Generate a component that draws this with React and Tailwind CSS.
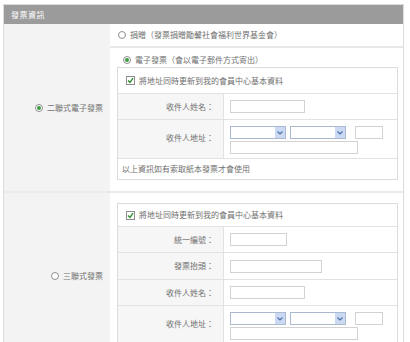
import React from "react"

const font = { fontFamily: '"Noto Sans CJK TC", "Noto Sans CJK SC", sans-serif' }

const Radio = ({ checked }) => (
  <span className="inline-flex w-[8px] h-[8px] rounded-full border border-[#8f8f8f] bg-white items-center justify-center shrink-0">
    {checked && <span className="w-[4px] h-[4px] rounded-full bg-[#3f9b3f]" />}
  </span>
)

const Checkbox = () => (
  <span className="inline-flex w-[9px] h-[9px] border border-[#8f8f8f] bg-white items-center justify-center shrink-0">
    <svg width="7" height="7" viewBox="0 0 7 7">
      <path d="M1 3.5 L3 5.5 L6 1.2" stroke="#2f8f2f" strokeWidth="1.4" fill="none" />
    </svg>
  </span>
)

const TextBox = ({ w }) => (
  <div className={`h-[13px] border border-[#d2d2d2] bg-white ${w}`} />
)

const Select = () => (
  <div className="h-[13px] w-[56px] border border-[#a9b9cf] bg-white flex justify-end">
    <div className="w-[10px] h-full bg-[#cbd9f3] flex items-center justify-center">
      <svg width="6" height="4" viewBox="0 0 6 4">
        <path d="M0.5 0.5 L3 3 L5.5 0.5" stroke="#4d6fa8" strokeWidth="1.2" fill="none" />
      </svg>
    </div>
  </div>
)

const Address = () => (
  <div className="flex flex-col gap-[2px]">
    <div className="flex items-center gap-[4px]">
      <Select />
      <Select />
      <div className="ml-[5px]">
        <TextBox w="w-[28px]" />
      </div>
    </div>
    <TextBox w="w-[128px]" />
  </div>
)

const Row = ({ label, h, top, children }) => (
  <div className={`flex border-t border-[#e2e2e2] ${h}`}>
    <div className={`w-[106px] bg-[#f6f6f6] border-r border-[#e2e2e2] flex justify-end pr-[9px] ${top ? "pt-[14px]" : "items-center"}`}>
      {label}
    </div>
    <div className={`flex-1 pl-[6px] flex ${top ? "pt-[6px]" : "items-center"}`}>{children}</div>
  </div>
)

const SyncRow = ({ h }) => (
  <div className={`flex items-center gap-[4px] pl-[8px] ${h}`}>
    <Checkbox />
    <span>將地址同時更新到我的會員中心基本資料</span>
  </div>
)

export default function App() {
  return (
    <div className="w-[410px] h-[342px] overflow-hidden bg-white pt-[4px] pl-[3px] text-[8px] leading-none text-[#707070]" style={font}>
      <div className="w-[401px] border border-[#dcdcdc]">
        <div className="h-[19px] bg-[#9b9b9b] text-white flex items-center pl-[7px] tracking-[0.5px]">發票資訊</div>

        {/* 二聯式電子發票 */}
        <div className="flex">
          <div className="w-[106px] bg-[#f3f3f3] flex items-center justify-end pr-[7px] gap-[4px]">
            <Radio checked />
            <span>二聯式電子發票</span>
          </div>
          <div className="flex-1">
            <div className="h-[24px] flex items-center gap-[4px] pl-[8px] border-b-2 border-[#e8e8e8]">
              <Radio />
              <span>捐贈（發票捐贈勵馨社會福利世界基金會）</span>
            </div>
            <div className="pl-[7px] pr-[5px] pt-[8px] pb-[11px]">
              <div className="flex items-center gap-[4px] pl-[6px] mb-[3px]">
                <Radio checked />
                <span>電子發票（會以電子郵件方式寄出）</span>
              </div>
              <div className="border border-[#dcdcdc]">
                <SyncRow h="h-[25px]" />
                <Row label="收件人姓名：" h="h-[26px]">
                  <TextBox w="w-[75px]" />
                </Row>
                <Row label="收件人地址：" h="h-[39px]" top>
                  <Address />
                </Row>
                <div className="h-[21px] border-t border-[#e2e2e2] flex items-center pl-[4px]">以上資訊如有索取紙本發票才會使用</div>
              </div>
            </div>
          </div>
        </div>

        {/* 三聯式發票 */}
        <div className="flex border-t-2 border-[#ebebeb]">
          <div className="w-[106px] bg-[#f3f3f3] flex items-center justify-end pr-[7px] gap-[4px]">
            <Radio />
            <span>三聯式發票</span>
          </div>
          <div className="flex-1 pl-[7px] pr-[5px] pt-[10px] pb-[12px]">
            <div className="border border-[#dcdcdc]">
              <SyncRow h="h-[22px]" />
              <Row label="統一編號：" h="h-[26px]">
                <TextBox w="w-[57px]" />
              </Row>
              <Row label="發票抬頭：" h="h-[27px]">
                <TextBox w="w-[92px]" />
              </Row>
              <Row label="收件人姓名：" h="h-[26px]">
                <TextBox w="w-[75px]" />
              </Row>
              <Row label="收件人地址：" h="h-[40px]" top>
                <Address />
              </Row>
            </div>
          </div>
        </div>
      </div>
    </div>
  )
}
